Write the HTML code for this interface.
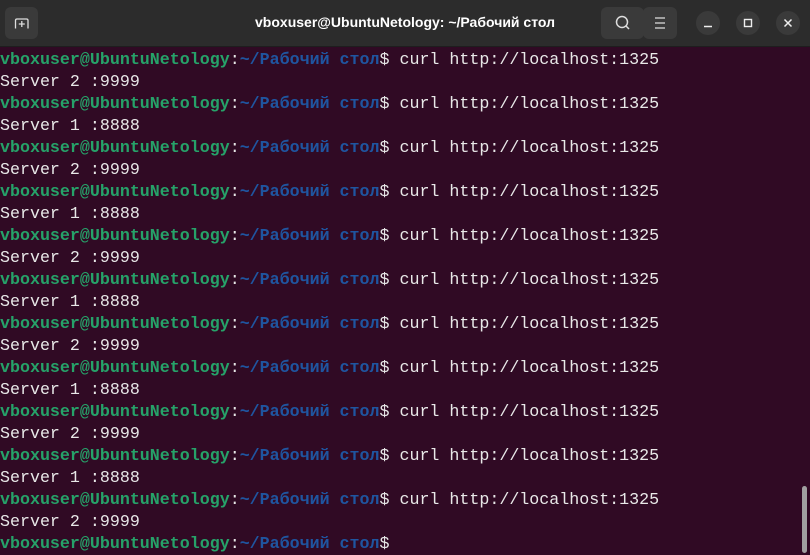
<!DOCTYPE html>
<html><head><meta charset="utf-8"><style>
html,body{margin:0;padding:0;width:810px;height:554px;overflow:hidden;background:#300a24}
.hdr{position:absolute;left:0;top:0;width:810px;height:46px;background:#2c2c2c;border-bottom:1px solid #1e1e1e}
.btn{position:absolute;top:7px;height:32px;background:#3a3a3a;border-radius:6px}
.circ{position:absolute;top:11px;width:24px;height:24px;border-radius:50%;background:#3a3a3a}
.title{position:absolute;left:0;width:810px;top:14px;text-align:center;color:#fff;font:bold 14px "Liberation Sans",sans-serif}
.term{position:absolute;left:0;top:49px;font-family:"Liberation Mono","DejaVu Sans Mono",monospace;font-size:16.65px;line-height:22px;color:#e8e8e8;white-space:pre}
.g{color:#26a269;font-weight:bold}.b{color:#1f55a0;font-weight:bold}
.sb{position:absolute;left:802px;top:486px;width:5px;height:67px;background:#a0a0a0;border-radius:3px}
</style></head><body>
<div class="hdr">
<div class="btn" style="left:5px;width:33px"><svg width="33" height="32"><path d="M10.5 21.5V13.5q0-1.5 1.5-1.5h9.5q1.5 0 1.5 1.5V21.5M16.8 14v6M13.8 17h6" stroke="#ddd" stroke-width="1.3" fill="none"/></svg></div>
<div class="title">vboxuser@UbuntuNetology: ~/Рабочий стол</div>
<div class="btn" style="left:601px;width:43px"><svg width="43" height="32"><circle cx="21" cy="15" r="5.5" stroke="#ddd" stroke-width="1.5" fill="none"/><path d="M25 19l3 3" stroke="#ddd" stroke-width="1.5"/></svg></div>
<div class="btn" style="left:643px;width:34px"><svg width="34" height="32"><path d="M12 11h10M12 16h10M12 21h10" stroke="#ddd" stroke-width="1.3"/></svg></div>
<div class="circ" style="left:696px"><svg width="24" height="24"><path d="M8 15.5h8" stroke="#eee" stroke-width="1.5"/></svg></div>
<div class="circ" style="left:736px"><svg width="24" height="24"><rect x="8.5" y="8.5" width="7" height="7" stroke="#eee" stroke-width="1.4" fill="none"/></svg></div>
<div class="circ" style="left:776px"><svg width="24" height="24"><path d="M8.5 8.5l7 7M15.5 8.5l-7 7" stroke="#eee" stroke-width="1.5"/></svg></div>
</div>
<div class="term"><span class="g">vboxuser@UbuntuNetology</span>:<span class="b">~/Рабочий стол</span>$ curl http://localhost:1325
Server 2 :9999
<span class="g">vboxuser@UbuntuNetology</span>:<span class="b">~/Рабочий стол</span>$ curl http://localhost:1325
Server 1 :8888
<span class="g">vboxuser@UbuntuNetology</span>:<span class="b">~/Рабочий стол</span>$ curl http://localhost:1325
Server 2 :9999
<span class="g">vboxuser@UbuntuNetology</span>:<span class="b">~/Рабочий стол</span>$ curl http://localhost:1325
Server 1 :8888
<span class="g">vboxuser@UbuntuNetology</span>:<span class="b">~/Рабочий стол</span>$ curl http://localhost:1325
Server 2 :9999
<span class="g">vboxuser@UbuntuNetology</span>:<span class="b">~/Рабочий стол</span>$ curl http://localhost:1325
Server 1 :8888
<span class="g">vboxuser@UbuntuNetology</span>:<span class="b">~/Рабочий стол</span>$ curl http://localhost:1325
Server 2 :9999
<span class="g">vboxuser@UbuntuNetology</span>:<span class="b">~/Рабочий стол</span>$ curl http://localhost:1325
Server 1 :8888
<span class="g">vboxuser@UbuntuNetology</span>:<span class="b">~/Рабочий стол</span>$ curl http://localhost:1325
Server 2 :9999
<span class="g">vboxuser@UbuntuNetology</span>:<span class="b">~/Рабочий стол</span>$ curl http://localhost:1325
Server 1 :8888
<span class="g">vboxuser@UbuntuNetology</span>:<span class="b">~/Рабочий стол</span>$ curl http://localhost:1325
Server 2 :9999
<span class="g">vboxuser@UbuntuNetology</span>:<span class="b">~/Рабочий стол</span>$</div>
<div class="sb"></div>
</body></html>
